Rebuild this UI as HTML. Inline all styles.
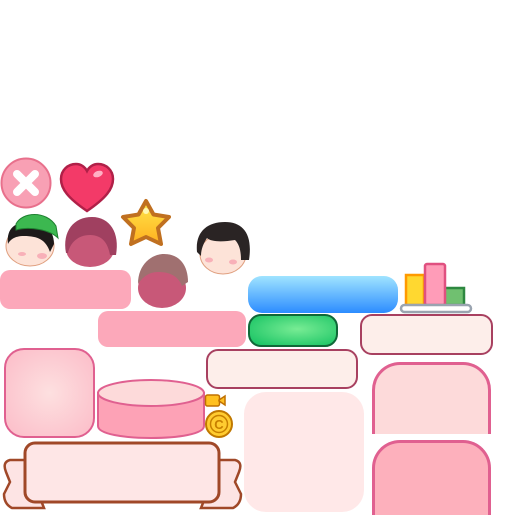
<!DOCTYPE html>
<html><head><style>
body{margin:0;width:512px;height:512px;background:#fff;position:relative;overflow:hidden;font-family:"Liberation Sans",sans-serif}
.a{position:absolute;box-sizing:border-box}
</style></head><body>
<svg class="a" style="left:0;top:157px" width="53" height="53"><circle cx="26" cy="26" r="24.5" fill="#f8a0b4" stroke="#e8708c" stroke-width="2"/><path d="M17 17L35 35M35 17L17 35" stroke="#fff" stroke-width="8" stroke-linecap="round"/></svg>
<svg class="a" style="left:58px;top:162px" width="58" height="52"><path d="M29 49C10 36 3 27 3 17C3 8 10 2 18 2C23 2 27 5 29 9C31 5 35 2 40 2C48 2 55 8 55 17C55 27 48 36 29 49Z" fill="#f33a68" stroke="#b02048" stroke-width="2.5"/><ellipse cx="40" cy="12" rx="5" ry="3" fill="#ffb0c4" transform="rotate(-20 40 12)"/></svg>
<svg class="a" style="left:118px;top:196px" width="56" height="56"><defs><linearGradient id="sg" x1="0" y1="0" x2="0" y2="1"><stop offset="0" stop-color="#ffe84a"/><stop offset="1" stop-color="#ffb020"/></linearGradient></defs><path d="M28 5L35.5 18.5L51 21L40 32L43 48L28 41L13 48L16 32L5 21L20.5 18.5Z" fill="url(#sg)" stroke="#c07020" stroke-width="4" stroke-linejoin="round"/><circle cx="28" cy="15" r="3" fill="#fff8b0"/></svg>
<svg class="a" style="left:2px;top:208px" width="60" height="62"><ellipse cx="28" cy="38" rx="24" ry="20" fill="#fde3d8" stroke="#e0a080"/><path d="M6 36C4 20 14 14 26 14C40 14 52 20 52 36L48 44C44 32 36 28 22 28C12 28 8 32 6 36Z" fill="#1e1a1a"/><path d="M14 16C20 4 44 2 54 18L56 30C48 22 28 18 14 22Z" fill="#3cb850" stroke="#1e8030"/><ellipse cx="20" cy="46" rx="4" ry="2" fill="#f8b0b8"/><ellipse cx="40" cy="48" rx="5" ry="3" fill="#f8b0b8"/></svg>
<svg class="a" style="left:60px;top:213px" width="60" height="58"><ellipse cx="30" cy="36" rx="24" ry="18" fill="#c85878"/><path d="M6 40C2 18 14 4 32 4C50 4 60 20 56 42L50 42C48 30 42 22 30 22C18 22 10 30 8 40Z" fill="#a04060"/></svg>
<svg class="a" style="left:134px;top:250px" width="58" height="60"><ellipse cx="28" cy="38" rx="24" ry="20" fill="#c85878"/><path d="M4 34C4 14 18 4 30 4C46 4 54 16 54 32L48 36C44 26 36 22 24 22C14 22 8 28 4 34Z" fill="#a07070"/></svg>
<svg class="a" style="left:193px;top:220px" width="60" height="58"><ellipse cx="30" cy="34" rx="23" ry="20" fill="#fde3d8" stroke="#e0a080"/><path d="M4 32C2 12 14 2 32 2C50 2 60 14 56 40L48 40C48 30 46 24 42 20C30 22 18 22 14 18C10 24 8 30 8 36Z" fill="#2a2424"/><ellipse cx="16" cy="40" rx="4" ry="2.5" fill="#f8b0b8"/><ellipse cx="40" cy="42" rx="4" ry="2.5" fill="#f8b0b8"/></svg>
<div class="a" style="left:0;top:270px;width:131px;height:39px;background:#fca8ba;border-radius:10px"></div>
<div class="a" style="left:98px;top:311px;width:148px;height:36px;background:#fca8ba;border-radius:10px"></div>
<div class="a" style="left:248px;top:276px;width:150px;height:37px;background:linear-gradient(#a0e4ff,#2c8cff);border-radius:14px"></div>
<div class="a" style="left:248px;top:314px;width:90px;height:33px;background:radial-gradient(ellipse at 55% 45%,#78ec94,#10c060);border:2px solid #106838;border-radius:13px"></div>
<svg class="a" style="left:398px;top:261px" width="76" height="54"><rect x="8" y="14" width="18" height="30" fill="#ffd830" stroke="#ff9a00" stroke-width="2.5"/><rect x="46" y="27" width="20" height="17" fill="#70c070" stroke="#2e8840" stroke-width="2.5"/><rect x="27" y="3" width="20" height="41" rx="2" fill="#ff9cb8" stroke="#e05080" stroke-width="2.5"/><rect x="3" y="44" width="70" height="7" rx="3.5" fill="#fff" stroke="#9aa4b0" stroke-width="2.5"/></svg>
<div class="a" style="left:360px;top:314px;width:133px;height:41px;background:#fdeeea;border:2px solid #a84060;border-radius:12px"></div>
<div class="a" style="left:206px;top:349px;width:152px;height:40px;background:#fdeeea;border:2px solid #a84060;border-radius:12px"></div>
<div class="a" style="left:4px;top:348px;width:91px;height:90px;background:radial-gradient(#fde0e0,#fcbcc8);border:2px solid #e06090;border-radius:20px"></div>
<svg class="a" style="left:96px;top:378px" width="110" height="62"><path d="M2 15V48C2 56 28 60 55 60C82 60 108 56 108 48V15Z" fill="#fda2b6" stroke="#e06090" stroke-width="2"/><ellipse cx="55" cy="15" rx="53" ry="13" fill="#fddada" stroke="#e06090" stroke-width="2"/></svg>
<svg class="a" style="left:204px;top:393px" width="32" height="48"><rect x="1.5" y="2" width="14" height="11" rx="2" fill="#ffc020" stroke="#c07000" stroke-width="1.5"/><path d="M15 7L21 3V12L15 8Z" fill="#ffc020" stroke="#c07000" stroke-width="1.5"/><circle cx="15" cy="31" r="13" fill="#ffcc30" stroke="#c07800" stroke-width="2"/><circle cx="15" cy="31" r="8.5" fill="none" stroke="#c88000" stroke-width="1.5"/><text x="15" y="36" font-size="13" font-weight="bold" text-anchor="middle" fill="#c88000" font-family="Liberation Sans">C</text></svg>
<div class="a" style="left:244px;top:392px;width:120px;height:120px;background:#ffe8e8;border-radius:22px"></div>
<div class="a" style="left:372px;top:362px;width:119px;height:72px;background:#fddada;border:3px solid #e06090;border-bottom:none;border-radius:28px 28px 0 0"></div>
<div class="a" style="left:372px;top:440px;width:119px;height:75px;background:#fdb0bc;border:3px solid #e06090;border-bottom:none;border-radius:28px 28px 0 0"></div>
<svg class="a" style="left:0;top:440px" width="245" height="72"><path d="M26 20H10Q2 22 6 32L10 42L4 54Q4 64 12 68H44L40 58Z" fill="#fde4e4" stroke="#a04828" stroke-width="2.5"/><path d="M219 20H235Q243 22 239 32L235 42L241 54Q241 64 233 68H201L205 58Z" fill="#fde4e4" stroke="#a04828" stroke-width="2.5"/><rect x="25" y="3" width="194" height="59" rx="10" fill="#fee6e6" stroke="#a04828" stroke-width="3"/></svg>
</body></html>
